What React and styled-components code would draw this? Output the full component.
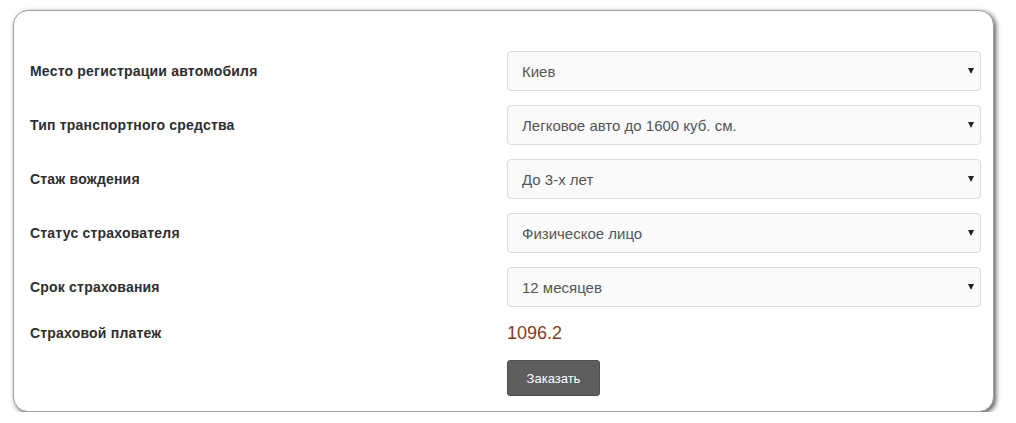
import React, { useState } from "react";
import styled, { createGlobalStyle } from "styled-components";

const fields = [
  { label: "Место регистрации автомобиля", options: ["Киев", "Харьков", "Одесса", "Днепр", "Львов"] },
  {
    label: "Тип транспортного средства",
    options: ["Легковое авто до 1600 куб. см.", "Легковое авто 1601-2000 куб. см.", "Легковое авто 2001-3000 куб. см."],
  },
  { label: "Стаж вождения", options: ["До 3-х лет", "Более 3-х лет"] },
  { label: "Статус страхователя", options: ["Физическое лицо", "Юридическое лицо"] },
  { label: "Срок страхования", options: ["12 месяцев", "6 месяцев", "3 месяца"] },
];

export default function App() {
  const [values, setValues] = useState(fields.map((f) => f.options[0]));

  const handleChange = (index) => (event) => {
    const next = [...values];
    next[index] = event.target.value;
    setValues(next);
  };

  return (
    <Page>
      <GlobalStyle />
      <Card>
        {fields.map((field, i) => (
          <Row key={field.label}>
            <Label>{field.label}</Label>
            <SelectWrap>
              <Select value={values[i]} onChange={handleChange(i)}>
                {field.options.map((o) => (
                  <option key={o} value={o}>
                    {o}
                  </option>
                ))}
              </Select>
            </SelectWrap>
          </Row>
        ))}
        <Row $compact>
          <Label>Страховой платеж</Label>
          <Price>1096.2</Price>
        </Row>
        <ButtonRow>
          <span />
          <OrderButton type="button">Заказать</OrderButton>
        </ButtonRow>
      </Card>
    </Page>
  );
}

const GlobalStyle = createGlobalStyle`
  body {
    margin: 0;
    background: #fff;
    font-family: "Liberation Sans", Arial, sans-serif;
  }
`;

const Page = styled.div`
  padding: 10px 0 0 13px;
`;

const Card = styled.div`
  box-sizing: border-box;
  width: 981px;
  height: 402px;
  background: #fff;
  border: 1px solid #a0a0a0;
  border-radius: 15px;
  box-shadow: 2px 2px 5px rgba(0, 0, 0, 0.65);
  padding: 40px 12px 0 16px;
  display: flex;
  flex-direction: column;
  gap: 14px;
`;

const Row = styled.div`
  display: grid;
  grid-template-columns: 1fr 474px;
  align-items: center;
  height: ${(p) => (p.$compact ? "24px" : "40px")};
`;

const ButtonRow = styled(Row)`
  height: 36px;
  margin-top: 1px;
`;

const Label = styled.div`
  font-size: 14px;
  font-weight: bold;
  letter-spacing: 0.2px;
  color: #2e2e2e;
`;

const SelectWrap = styled.div`
  position: relative;
  height: 40px;

  &::after {
    content: "";
    position: absolute;
    right: 7px;
    top: 17px;
    border-left: 3.5px solid transparent;
    border-right: 3.5px solid transparent;
    border-top: 6px solid #222;
    pointer-events: none;
  }
`;

const Select = styled.select`
  appearance: none;
  box-sizing: border-box;
  width: 100%;
  height: 40px;
  padding: 0 24px 0 14px;
  font-family: "Liberation Sans", Arial, sans-serif;
  font-size: 15px;
  color: #555;
  background: #fafafa;
  border: 1px solid #dcdcdc;
  border-radius: 4px;
  outline: none;
`;

const Price = styled.div`
  font-size: 18px;
  color: #8a3a1c;
`;

const OrderButton = styled.button`
  width: 93px;
  height: 36px;
  background: #5e5e5e;
  border: 1px solid #4e4e4e;
  border-radius: 3px;
  color: #fff;
  font-family: "Liberation Sans", Arial, sans-serif;
  font-size: 13px;
  cursor: pointer;
`;
